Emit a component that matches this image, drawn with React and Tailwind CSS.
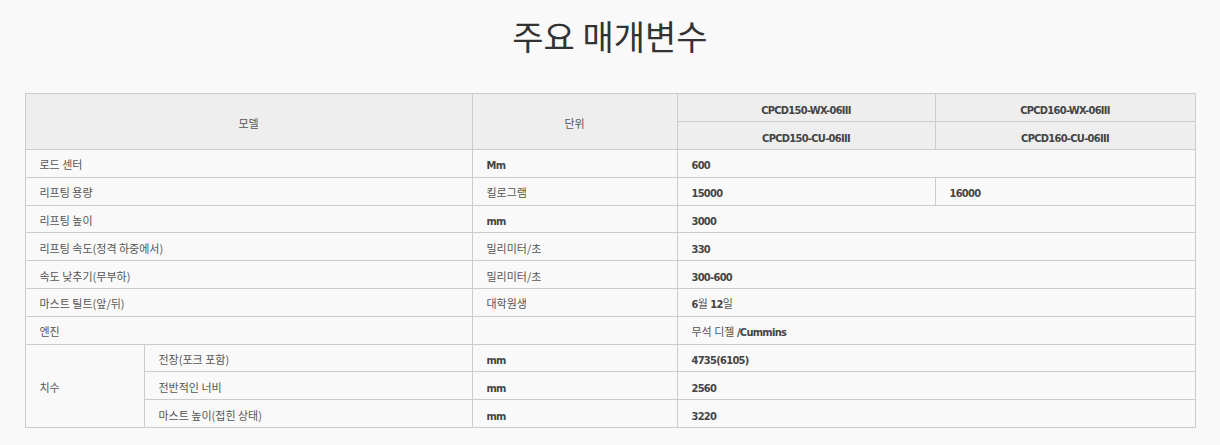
import React from 'react';

const kr = { fontFamily: '"Noto Sans CJK KR", "Noto Sans", sans-serif' };
const narrow = { fontFamily: '"Liberation Sans Narrow", "DejaVu Sans Condensed", "Liberation Sans", sans-serif' };

const rows = [
  { label: '로드 센터', unit: 'Mm', values: ['600'] },
  { label: '리프팅 용량', unit: '킬로그램', values: ['15000', '16000'] },
  { label: '리프팅 높이', unit: 'mm', values: ['3000'] },
  { label: '리프팅 속도(정격 하중에서)', unit: '밀리미터/초', values: ['330'] },
  { label: '속도 낮추기(무부하)', unit: '밀리미터/초', values: ['300-600'] },
  { label: '마스트 틸트(앞/뒤)', unit: '대학원생', values: ['6월 12일'] },
  { label: '엔진', unit: '', values: ['무석 디젤 /Cummins'] },
];

const dims = [
  { label: '전장(포크 포함)', unit: 'mm', value: '4735(6105)' },
  { label: '전반적인 너비', unit: 'mm', value: '2560' },
  { label: '마스트 높이(접힌 상태)', unit: 'mm', value: '3220' },
];

const cell = 'border border-[#cccccc] h-[27.8px] px-[14px] py-0 text-left align-middle';
const head = 'border border-[#cccccc] h-[28px] p-0 text-center align-middle bg-[#eeeeee]';

// Korean label text stays in CJK, latin/number data in a narrow bold face
const Mixed = ({ text, latinBold = true }) => {
  const parts = text.split(/([A-Za-z0-9\-\/.()]+)/);
  return parts.map((p, i) =>
    /[A-Za-z0-9]/.test(p) && latinBold ? (
      <span key={i} className="font-bold text-[#444] text-[11px] tracking-[-0.7px]" style={narrow}>
        {p}
      </span>
    ) : (
      <span key={i} className="text-[#555] text-[11px]" style={kr}>{p}</span>
    )
  );
};

const SpecTable = () => {
  return (
    <table className="w-[1170px] mx-auto table-fixed border-collapse leading-none">
      <colgroup>
        <col className="w-[119px]" />
        <col className="w-[328px]" />
        <col className="w-[205px]" />
        <col className="w-[258px]" />
        <col className="w-[260px]" />
      </colgroup>
      <thead>
        <tr>
          <th rowSpan={2} colSpan={2} className={head + ' font-normal'}><Mixed text="모델" /></th>
          <th rowSpan={2} className={head + ' font-normal'}><Mixed text="단위" /></th>
          <th className={head}><Mixed text="CPCD150-WX-06III" /></th>
          <th className={head}><Mixed text="CPCD160-WX-06III" /></th>
        </tr>
        <tr>
          <th className={head}><Mixed text="CPCD150-CU-06III" /></th>
          <th className={head}><Mixed text="CPCD160-CU-06III" /></th>
        </tr>
      </thead>
      <tbody>
        {rows.map((r) => (
          <tr key={r.label}>
            <td colSpan={2} className={cell}><Mixed text={r.label} latinBold={false} /></td>
            <td className={cell}><Mixed text={r.unit} /></td>
            {r.values.length === 1 ? (
              <td colSpan={2} className={cell}><Mixed text={r.values[0]} /></td>
            ) : (
              r.values.map((v) => (
                <td key={v} className={cell}><Mixed text={v} /></td>
              ))
            )}
          </tr>
        ))}
        {dims.map((d, i) => (
          <tr key={d.label}>
            {i === 0 && (
              <td rowSpan={3} className={cell}><Mixed text="치수" /></td>
            )}
            <td className={cell}><Mixed text={d.label} latinBold={false} /></td>
            <td className={cell}><Mixed text={d.unit} /></td>
            <td colSpan={2} className={cell}><Mixed text={d.value} /></td>
          </tr>
        ))}
      </tbody>
    </table>
  );
};

export default function App() {
  return (
    <div className="min-h-[445px] bg-[#f9f9f9] pt-[13px]">
      <h1 className="text-center text-[34px] leading-[46px] text-[#333] font-normal" style={kr}>
        주요 매개변수
      </h1>
      <div className="mt-[34px]">
        <SpecTable />
      </div>
    </div>
  );
}
